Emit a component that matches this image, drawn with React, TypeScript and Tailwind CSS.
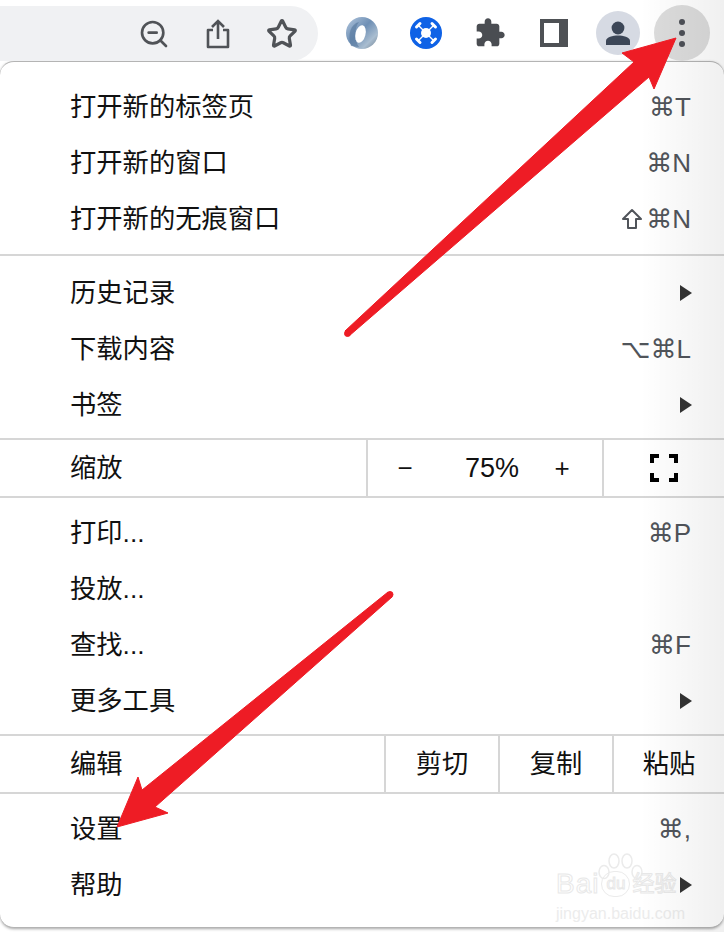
import type { ReactNode } from "react";
import { Star, ZoomOut } from "lucide-react";

// Police commune : CJK pour les libellés, DejaVu pour les symboles ⌘ ⌥
const CJK = "font-['Liberation_Sans','Noto_Sans_CJK_SC',sans-serif]";
const RACCOURCI = "font-['Liberation_Sans','DejaVu_Sans',sans-serif]";

type Item = { label: string; raccourci?: string; maj?: boolean; sousMenu?: boolean };

const SECTION_1: Item[] = [
  { label: "打开新的标签页", raccourci: "⌘T" },
  { label: "打开新的窗口", raccourci: "⌘N" },
  { label: "打开新的无痕窗口", raccourci: "⌘N", maj: true },
];
const SECTION_2: Item[] = [
  { label: "历史记录", sousMenu: true },
  { label: "下载内容", raccourci: "⌥⌘L" },
  { label: "书签", sousMenu: true },
];
const SECTION_3: Item[] = [
  { label: "打印...", raccourci: "⌘P" },
  { label: "投放..." },
  { label: "查找...", raccourci: "⌘F" },
  { label: "更多工具", sousMenu: true },
];
const SECTION_4: Item[] = [
  { label: "设置", raccourci: "⌘," },
  { label: "帮助", sousMenu: true },
];

function Ligne({ item }: { item: Item }) {
  return (
    <div className="flex h-[56px] items-center justify-between pl-[70px] pr-[33px]">
      <span className="mt-[1px] text-[26.3px] leading-none text-[#111]">{item.label}</span>
      {item.raccourci && (
        <span className={`${RACCOURCI} flex items-center text-[26px] leading-none text-[#50545a]`}>
          {item.maj && (
            <svg width="22" height="22" viewBox="0 0 22 22" className="mr-[3px]" fill="none" stroke="#50545a" strokeWidth="2">
              <path d="M11 2 L20 11 H15 V20 H7 V11 H2 Z" strokeLinejoin="round" />
            </svg>
          )}
          {item.raccourci}
        </span>
      )}
      {item.sousMenu && (
        <span className="mr-[-1px] h-0 w-0 border-y-[8px] border-l-[12px] border-y-transparent border-l-[#333]" />
      )}
    </div>
  );
}

function Separateur() {
  return <div className="h-[2px] bg-[#d6d6d6]" />;
}

function Cellule({ children }: { children: ReactNode }) {
  return <div className="flex h-[64px] w-[64px] shrink-0 items-center justify-center">{children}</div>;
}

function IconeAnneau() {
  return (
    <svg width="34" height="34" viewBox="0 0 34 34">
      <defs>
        <linearGradient id="anneau" x1="0" y1="0" x2="1" y2="1">
          <stop offset="0" stopColor="#b4c8de" />
          <stop offset="0.45" stopColor="#6e8fb5" />
          <stop offset="0.75" stopColor="#a9bdd0" />
          <stop offset="1" stopColor="#6f7f8e" />
        </linearGradient>
      </defs>
      <ellipse cx="17" cy="17" rx="16" ry="16" fill="url(#anneau)" />
      <path d="M6 30 C2 18 6 8 14 6 C9 12 9 24 14 31 Z" fill="#5d7da3" opacity="0.7" />
      <ellipse cx="15.5" cy="18" rx="5" ry="9" transform="rotate(14 15.5 18)" fill="#fff" />
    </svg>
  );
}

function IconeReseau() {
  return (
    <svg width="32" height="32" viewBox="0 0 32 32">
      <circle cx="16" cy="16" r="16" fill="#0f62e6" />
      <path d="M8.5 8.5 L23.5 23.5 M23.5 8.5 L8.5 23.5" stroke="#fff" strokeWidth="1.4" />
      <circle cx="16" cy="16" r="5" fill="#fff" />
      <path d="M6.5 10 L10 6.5 M22 6.5 L25.5 10 M6.5 22 L10 25.5 M22 25.5 L25.5 22" stroke="#fff" strokeWidth="3" strokeLinecap="round" />
    </svg>
  );
}

function Barre() {
  return (
    <div className="flex h-[61px] items-start pt-[1px]">
      <div className="mt-[5px] flex h-[55px] w-[318px] shrink-0 items-center justify-end rounded-r-[28px] bg-[#f0f1f3] pr-[4px]">
        <Cellule>
          <ZoomOut size={32} strokeWidth={2} className="text-[#505357]" />
        </Cellule>
        <Cellule>
          <svg width="28" height="30" viewBox="0 0 28 30" fill="none" stroke="#505357" strokeWidth="2.6">
            <path d="M9 11 H4 V28 H24 V11 H19" strokeLinejoin="round" />
            <path d="M14 20 V3 M8 8 L14 2 L20 8" />
          </svg>
        </Cellule>
        <Cellule>
          <Star size={32} strokeWidth={2.4} className="text-[#505357]" />
        </Cellule>
      </div>
      <div className="ml-[12px] flex items-center">
        <Cellule>
          <IconeAnneau />
        </Cellule>
        <Cellule>
          <IconeReseau />
        </Cellule>
        <Cellule>
          <svg width="32" height="32" viewBox="0 0 24 24" fill="#4a4d52">
            <path d="M20.5 11H19V7c0-1.1-.9-2-2-2h-4V3.5C13 2.12 11.88 1 10.5 1S8 2.12 8 3.5V5H4c-1.1 0-1.99.9-1.99 2v3.8H3.5c1.49 0 2.7 1.21 2.7 2.7s-1.21 2.7-2.7 2.7H2V20c0 1.1.9 2 2 2h3.8v-1.5c0-1.49 1.21-2.7 2.7-2.7 1.49 0 2.7 1.21 2.7 2.7V22H17c1.1 0 2-.9 2-2v-4h1.5c1.38 0 2.5-1.12 2.5-2.5S21.88 11 20.5 11z" />
          </svg>
        </Cellule>
        <Cellule>
          <div className="h-[28px] w-[28px] border-y-[4px] border-l-[4px] border-r-[9px] border-[#4e5155] bg-white" />
        </Cellule>
        <Cellule>
          <div className="flex h-[44px] w-[44px] items-center justify-center rounded-full bg-[#d6dae3]">
            <svg width="26" height="26" viewBox="0 0 26 26" fill="#3c4657">
              <circle cx="13" cy="8" r="6.4" />
              <path d="M1 25 V21 C1 17 8 15.5 13 15.5 C18 15.5 25 17 25 21 V25 Z" />
            </svg>
          </div>
        </Cellule>
        <Cellule>
          <div className="flex h-[56px] w-[56px] flex-col items-center justify-center gap-[5px] rounded-full bg-[#dcdcdc]">
            <span className="h-[6px] w-[6px] rounded-full bg-[#4d5057]" />
            <span className="h-[6px] w-[6px] rounded-full bg-[#4d5057]" />
            <span className="h-[6px] w-[6px] rounded-full bg-[#4d5057]" />
          </div>
        </Cellule>
      </div>
    </div>
  );
}

function LigneZoom() {
  return (
    <div className="flex h-[56px] items-center">
      <span className="mt-[1px] w-[366px] pl-[70px] text-[26.3px] leading-none text-[#111]">缩放</span>
      <div className="flex h-full w-[238px] items-center border-x-2 border-[#d6d6d6] text-[#111]">
        <span className="w-[74px] text-center text-[26px] leading-none">−</span>
        <span className="w-[100px] text-center font-['Liberation_Sans',sans-serif] text-[27px] leading-none">75%</span>
        <span className="w-[40px] text-center text-[26px] leading-none">+</span>
      </div>
      <div className="flex flex-1 items-center justify-center">
        <svg width="28" height="28" viewBox="0 0 28 28" fill="none" stroke="#000" strokeWidth="4">
          <path d="M2 9 V2 H9 M19 2 H26 V9 M26 19 V26 H19 M9 26 H2 V19" />
        </svg>
      </div>
    </div>
  );
}

function LigneEdition() {
  return (
    <div className="flex h-[56px] items-center">
      <span className="mt-[1px] w-[384px] pl-[70px] text-[26.3px] leading-none text-[#111]">编辑</span>
      {["剪切", "复制", "粘贴"].map((l) => (
        <span
          key={l}
          className="flex h-full w-[114px] shrink-0 items-center justify-center border-l-2 border-[#d6d6d6] text-[26.3px] leading-none text-[#111] last:w-[112px]"
        >
          {l}
        </span>
      ))}
    </div>
  );
}

function Filigrane() {
  return (
    <div className="pointer-events-none absolute left-[556px] top-[853px] flex w-[134px] flex-col items-start text-[#ececec]">
      <svg width="48" height="34" viewBox="0 0 48 34" className="ml-[40px]" fill="none" stroke="#ebebeb" strokeWidth="1.5">
        <ellipse cx="8" cy="19" rx="5" ry="6.5" />
        <ellipse cx="18" cy="8" rx="5" ry="7" />
        <ellipse cx="31" cy="8" rx="5" ry="7" />
        <ellipse cx="41" cy="19" rx="5" ry="6.5" />
      </svg>
      <div className="mt-[-19px] flex items-center font-['Liberation_Sans','Noto_Sans_CJK_SC',sans-serif] text-[28px] leading-[32px] [-webkit-text-stroke:1px_#e8e8e8]">
        <span className="tracking-[1px] text-white">Bai</span>
        <span className="mx-[2px] rounded-full border border-[#ebebeb] px-[4px] text-[17px] leading-[24px] text-white">du</span>
        <span className="text-[22px] text-white">经验</span>
      </div>
      <span className="mt-[6px] font-['Liberation_Sans',sans-serif] text-[16px] leading-[16px] text-[#ececec]">jingyan.baidu.com</span>
    </div>
  );
}

function Fleches() {
  return (
    <svg className="pointer-events-none absolute left-0 top-0" width="724" height="932" viewBox="0 0 724 932">
      <g fill="#ee1c25" stroke="#ee1c25" strokeWidth="1" strokeLinejoin="round">
        <polygon points="676,38 622,53 634,62 345,331 349,336 649,77 654,89" />
        <circle cx="347.5" cy="333.5" r="3" />
        <polygon points="117,827 138,777 142,790 388,592 392,597 155,807 168,813" />
        <circle cx="390" cy="594.5" r="3" />
      </g>
    </svg>
  );
}

export default function App() {
  return (
    <div className={`${CJK} relative h-[932px] w-[724px] overflow-hidden bg-white`}>
      <Barre />
      <div className="h-[867px] rounded-[14px] border-y border-[#b4b4b4] bg-white pt-[17px] shadow-[0_1px_3px_rgba(0,0,0,0.35)]">
        {SECTION_1.map((i) => (
          <Ligne key={i.label} item={i} />
        ))}
        <div className="h-[7px]" />
        <Separateur />
        <div className="h-[9px]" />
        {SECTION_2.map((i) => (
          <Ligne key={i.label} item={i} />
        ))}
        <div className="h-[5px]" />
        <Separateur />
        <LigneZoom />
        <Separateur />
        <div className="h-[7px]" />
        {SECTION_3.map((i) => (
          <Ligne key={i.label} item={i} />
        ))}
        <div className="h-[5px]" />
        <Separateur />
        <LigneEdition />
        <Separateur />
        <div className="h-[7px]" />
        {SECTION_4.map((i) => (
          <Ligne key={i.label} item={i} />
        ))}
      </div>
      <Filigrane />
      {/* Dégradé gris sur le bord droit de la capture */}
      <div className="pointer-events-none absolute right-0 top-0 h-full w-[84px] bg-gradient-to-r from-transparent to-black/[0.06]" />
      <Fleches />
    </div>
  );
}
